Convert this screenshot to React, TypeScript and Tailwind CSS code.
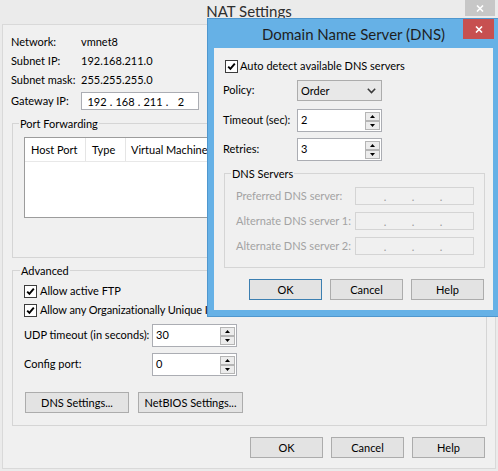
import React from "react";

function CloseGlyph({ size = 8 }: { size?: number }) {
  return (
    <svg width={size} height={size - 1} viewBox="0 0 8 7">
      <path d="M1 0.5 L7 6.5 M7 0.5 L1 6.5" stroke="#fff" strokeWidth="1.6" fill="none" />
    </svg>
  );
}

function CheckBox() {
  return (
    <span className="flex h-[13px] w-[13px] shrink-0 items-center justify-center border border-[#3c3c3c] bg-white">
      <svg width="9" height="9" viewBox="0 0 9 9">
        <path d="M1.2 4.6 L3.4 6.9 L7.8 1.6" fill="none" stroke="#000" strokeWidth="1.9" />
      </svg>
    </span>
  );
}

function Btn({ label, w = 73, focus = false }: { label: string; w?: number; focus?: boolean }) {
  return (
    <div
      style={{ width: w }}
      className={
        "flex h-[21px] shrink-0 items-center justify-center whitespace-nowrap border bg-[#e3e3e3] leading-[15px] " +
        (focus ? "border-[#3c7fb1]" : "border-[#acacac]")
      }
    >
      {label}
    </div>
  );
}

function Arrow({ up }: { up?: boolean }) {
  return (
    <span className="flex h-[9px] w-[15px] items-center justify-center border border-[#b5b5b5] bg-[#ececec]">
      <svg width="5" height="3" viewBox="0 0 5 3">
        {up ? <path d="M2.5 0 L5 3 L0 3 Z" fill="#000" /> : <path d="M0 0 L5 0 L2.5 3 Z" fill="#000" />}
      </svg>
    </span>
  );
}

function SpinBox({ value }: { value: string }) {
  return (
    <div className="flex h-[23px] w-[85px] shrink-0 justify-between border border-[#abadb3] bg-white">
      <span className="pl-[3px] pt-[2px] leading-[15px]">{value}</span>
      <div className="flex flex-col pr-[1px] pt-[2px]">
        <Arrow up />
        <Arrow />
      </div>
    </div>
  );
}

function IpBox({
  parts,
  w,
  disabled = false,
}: {
  parts: string[];
  w: number;
  disabled?: boolean;
}) {
  return (
    <div
      style={{ width: w }}
      className={
        "flex h-[18px] shrink-0 items-center pl-[2px] " +
        (disabled ? "border border-[#d4d4d4] bg-[#f0f0f0] text-[#9a9a9a]" : "border border-[#abadb3] bg-white")
      }
    >
      {parts.map((p, i) => (
        <React.Fragment key={i}>
          <span className="w-[26px] text-center leading-[15px]">{p}</span>
          {i < 3 && <span className="flex w-[2px] justify-center leading-[15px]">.</span>}
        </React.Fragment>
      ))}
    </div>
  );
}

function GroupBox({
  title,
  offset,
  className,
  children,
}: {
  title: string;
  offset: string;
  className: string;
  children: React.ReactNode;
}) {
  return (
    <fieldset className={"border border-[#d5d5d5] " + className}>
      <legend className={"px-[1px] leading-[15px] " + offset}>{title}</legend>
      {children}
    </fieldset>
  );
}

const info: [string, string][] = [
  ["Network:", "vmnet8"],
  ["Subnet IP:", "192.168.211.0"],
  ["Subnet mask:", "255.255.255.0"],
];

export default function App() {
  return (
    <div className="relative h-[471px] w-[498px] overflow-hidden whitespace-nowrap bg-[#ebebeb] font-[Lato,sans-serif] text-[11px] text-black">
      {/* NAT Settings window: caption */}
      <div className="relative flex h-[24px] justify-center">
        <span className="pt-[1px] text-[15px] leading-[20px] text-[#2e2e2e]">NAT Settings</span>
        <span className="absolute right-[3px] top-0 flex h-[16px] w-[30px] items-center justify-center bg-[#c7c7c7]">
          <CloseGlyph />
        </span>
      </div>

      {/* NAT Settings window: client area */}
      <div className="ml-[2px] h-[445px] w-[494px] border border-[#d9d9d9] bg-[#f0f0f0]">
        <div className="pl-[8px] pt-[8px]">
          {info.map(([k, v]) => (
            <div key={k} className="flex h-[19px] items-center">
              <span className="w-[70px] shrink-0">{k}</span>
              <span>{v}</span>
            </div>
          ))}
          <div className="mt-[2px] flex h-[18px] items-center">
            <span className="w-[70px] shrink-0">Gateway IP:</span>
            <IpBox parts={["192", "168", "211", "2"]} w={118} />
          </div>
        </div>

        <GroupBox title="Port Forwarding" offset="ml-[6px]" className="ml-[9px] mt-[6px] h-[142px] w-[475px]">
          <div className="ml-[11px] mt-[6px] h-[81px] w-[451px] border border-[#9c9c9c] bg-white">
            <div className="flex h-[24px] overflow-hidden border-b border-[#e8e8e8]">
              <div className="w-[61px] shrink-0 border-r border-[#e5e5e5] pl-[6px] leading-[23px]">Host Port</div>
              <div className="w-[40px] shrink-0 border-r border-[#e5e5e5] pl-[6px] leading-[23px]">Type</div>
              <div className="w-[84px] shrink-0 overflow-hidden pl-[5px] leading-[23px]">Virtual Machine IP Address</div>
            </div>
          </div>
        </GroupBox>

        <GroupBox title="Advanced" offset="ml-[7px]" className="ml-[9px] mt-[5px] h-[163px] w-[475px]">
          <div className="pl-[11px] pt-[4px]">
            <div className="flex h-[19px] items-center gap-[3px]">
              <CheckBox />
              <span>Allow active FTP</span>
            </div>
            <div className="flex h-[19px] items-center gap-[3px]">
              <CheckBox />
              <span className="tracking-[-0.1px]">Allow any Organizationally Unique Identifier</span>
            </div>
            <div className="mt-[4px] flex items-center">
              <span className="w-[128px] shrink-0">UDP timeout (in seconds):</span>
              <SpinBox value="30" />
            </div>
            <div className="mt-[6px] flex items-center">
              <span className="w-[128px] shrink-0">Config port:</span>
              <SpinBox value="0" />
            </div>
            <div className="mt-[16px] flex gap-[9px] pl-[1px]">
              <Btn label="DNS Settings..." w={104} />
              <Btn label="NetBIOS Settings..." w={105} />
            </div>
          </div>
        </GroupBox>

        <div className="mt-[11px] flex justify-end gap-[8px] pr-[10px]">
          <Btn label="OK" />
          <Btn label="Cancel" />
          <Btn label="Help" />
        </div>
      </div>

      {/* Domain Name Server window, active, on top */}
      <div className="absolute left-[207px] top-[18px] h-[299px] w-[293px] border border-[#4f97ce] bg-[#66b1e6]">
        <div className="relative flex h-[29px] items-center justify-center">
          <span className="text-[15px] leading-[20px] text-[#1e1e1e]">Domain Name Server (DNS)</span>
          <span className="absolute right-[5px] top-0 flex h-[20px] w-[31px] items-center justify-center bg-[#c75050]">
            <CloseGlyph />
          </span>
        </div>
        <div className="ml-[6px] h-[262px] w-[279px] overflow-hidden bg-[#f0f0f0] pt-[9px]">
          <div className="flex h-[19px] items-center gap-[2px] pl-[11px]">
            <CheckBox />
            <span>Auto detect available DNS servers</span>
          </div>
          <div className="mt-[4px] flex items-center pl-[9px]">
            <span className="w-[74px] shrink-0">Policy:</span>
            <div className="flex h-[21px] w-[85px] shrink-0 items-center justify-between border border-[#acacac] bg-[#e8e8e8] pl-[3px] pr-[5px]">
              <span className="leading-[15px]">Order</span>
              <svg width="9" height="6" viewBox="0 0 9 6">
                <path d="M0.8 0.8 L4.5 4.6 L8.2 0.8" fill="none" stroke="#3a3a3a" strokeWidth="1.5" />
              </svg>
            </div>
          </div>
          <div className="mt-[8px] flex items-center pl-[9px]">
            <span className="w-[74px] shrink-0">Timeout (sec):</span>
            <SpinBox value="2" />
          </div>
          <div className="mt-[6px] flex items-center pl-[9px]">
            <span className="w-[74px] shrink-0">Retries:</span>
            <SpinBox value="3" />
          </div>

          <GroupBox title="DNS Servers" offset="ml-[6px]" className="ml-[10px] mt-[5px] h-[102px] w-[261px]">
            <div className="flex flex-col gap-[7px] pl-[11px] pt-[6px] text-[#a3a3a3]">
              {["Preferred DNS server:", "Alternate DNS server 1:", "Alternate DNS server 2:"].map((l) => (
                <div key={l} className="flex items-center">
                  <span className="w-[119px] shrink-0">{l}</span>
                  <IpBox parts={["", "", "", ""]} w={119} disabled />
                </div>
              ))}
            </div>
          </GroupBox>

          <div className="mt-[11px] flex justify-end gap-[8px] pr-[9px]">
            <Btn label="OK" focus />
            <Btn label="Cancel" />
            <Btn label="Help" />
          </div>
        </div>
      </div>
    </div>
  );
}
